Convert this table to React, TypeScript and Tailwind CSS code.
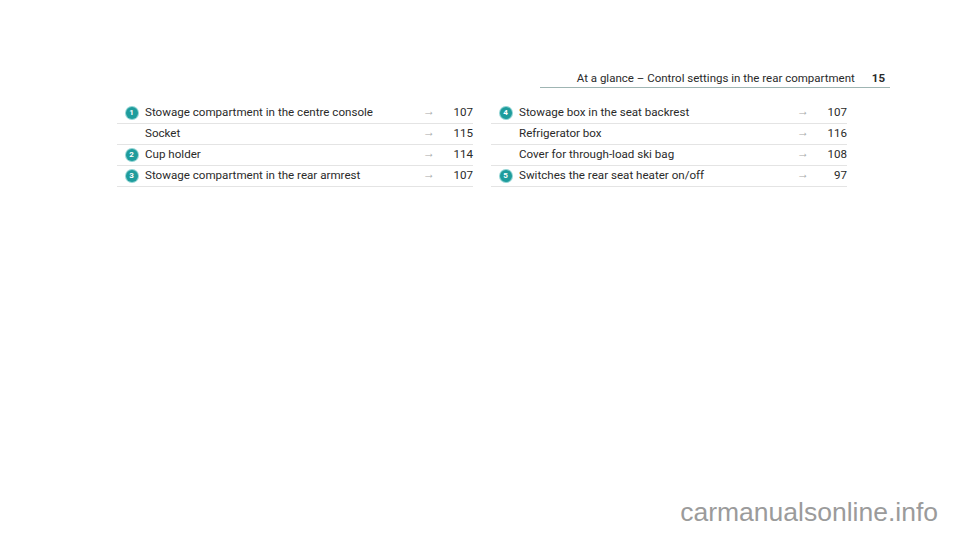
import React from "react";

type Row = { n?: number; text: string; page: string };

const left: Row[] = [
  { n: 1, text: "Stowage compartment in the centre console", page: "107" },
  { text: "Socket", page: "115" },
  { n: 2, text: "Cup holder", page: "114" },
  { n: 3, text: "Stowage compartment in the rear armrest", page: "107" },
];
const right: Row[] = [
  { n: 4, text: "Stowage box in the seat backrest", page: "107" },
  { text: "Refrigerator box", page: "116" },
  { text: "Cover for through-load ski bag", page: "108" },
  { n: 5, text: "Switches the rear seat heater on/off", page: "97" },
];

function Badge({ n }: { n: number }) {
  return (
    <span className="flex h-[12px] w-[12px] items-center justify-center rounded-full bg-[#1e9c9c] ring-1 ring-[#8fd3d3] text-[8px] font-bold leading-none text-white">
      {n}
    </span>
  );
}

function Table({ rows }: { rows: Row[] }) {
  return (
    <div className="w-[356px]">
      {rows.map((r, i) => (
        <div key={i} className="flex h-[21px] items-center border-b border-[#e4e4e4]">
          <div className="flex w-[28px] justify-center pl-[1px]">{r.n ? <Badge n={r.n} /> : null}</div>
          <div className="flex-1 text-[11.6px] text-[#2a2a2a]">{r.text}</div>
          <div className="-mt-[5px] w-[16px] text-[12px] text-[#a8a8a8]">→</div>
          <div className="w-[34px] text-right text-[11.6px] text-[#2a2a2a]">{r.page}</div>
        </div>
      ))}
    </div>
  );
}

export default function App() {
  return (
    <div className="relative h-[533px] w-[960px] overflow-hidden bg-white" style={{ fontFamily: "Roboto, 'Liberation Sans', sans-serif" }}>
      <div className="pt-[71px]">
        <div className="ml-[540px] flex h-[17px] w-[350px] items-center justify-end border-b border-[#9fb5b3] pb-[1px] text-[11.5px] text-[#2a2a2a]">
          <span>At a glance – Control settings in the rear compartment</span>
          <span className="ml-[17px] mr-[5px] font-bold">15</span>
        </div>
        <div className="ml-[117px] mt-[15px] flex gap-[18px]">
          <Table rows={left} />
          <Table rows={right} />
        </div>
      </div>
      <div className="absolute bottom-[4px] right-[22px] text-[26.5px] leading-none pb-[4px] text-[#9b9b9b]" style={{ fontFamily: "'Liberation Sans', sans-serif" }}>
        carmanualsonline.info
      </div>
    </div>
  );
}
